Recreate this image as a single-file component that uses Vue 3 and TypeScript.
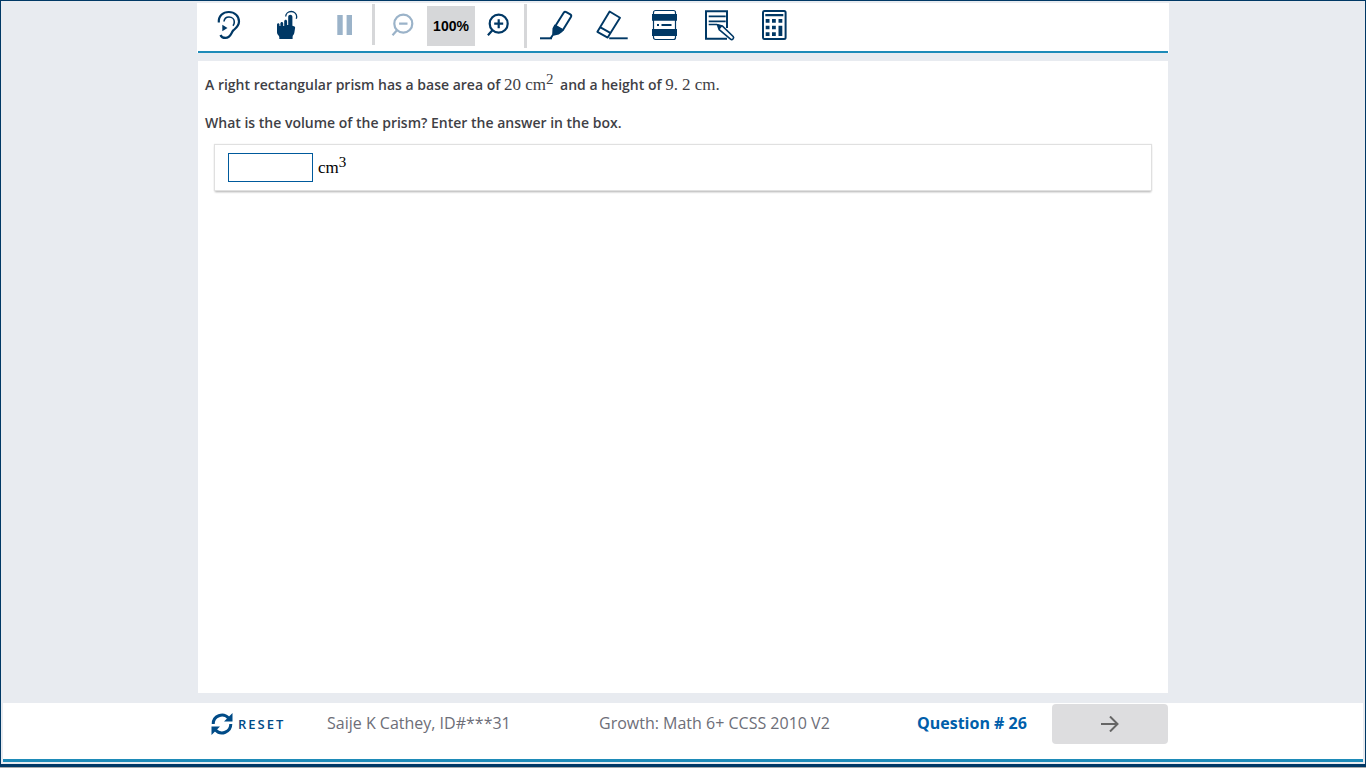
<script setup lang="ts">
import { ref } from 'vue'

const answer = ref('')
const zoom = ref(100)
const questionNumber = 26

function changeZoom(step: number) {
  zoom.value = Math.min(200, Math.max(100, zoom.value + step))
}
</script>

<template>
  <div class="frame">
    <header class="toolbar">
      <div class="group">
        <button class="tool" type="button" aria-label="Read aloud">
          <svg viewBox="0 0 40 40" fill="none" stroke="currentColor">
            <path d="M11.8 16.5C11.3 10 16 6 21.8 6c6 0 10.2 4.200 10.200 9.500 0 4.500-3 6.500-5.500 8.700C24 26.500 24 31.900 18.500 31.900c-2.700 0-4.300-1-5-2.900" stroke-width="2.200" />
            <path d="M17 15.500c.3-2.800 2.500-4.500 5-4.500 3.200 0 5.300 2.200 5.300 5 0 1.600-.4 2.700-1.300 3.800" stroke-width="1.600" />
            <path d="M15.300 18.700v6.600l5.200-3.300z" fill="currentColor" stroke="none" />
          </svg>
        </button>
        <button class="tool" type="button" aria-label="Pointer">
          <svg viewBox="0 0 40 40" fill="currentColor">
            <path d="M12 18.800c0-2 2.500-2 2.500 0V20h.9v-2.500c0-2.100 2.800-2.100 2.800 0V20h1v-4.500c0-2.200 2.900-2.200 2.900 0V19h1.100v-8.300c0-2.700 4.200-2.700 4.200 0v9l2.100.9c.5.300.7.700.6 1.400l-.8 5c-.4 1.800-1.700 2.200-1.700 4V33H14.300v-2c0-1.300-2.300-2.300-2.300-4.500z" />
            <path d="M20.700 10.500c.1-3 2.500-5 5.500-5 3.300 0 5.500 2.500 5.500 5.200 0 .7-.2 1.400-.5 2" fill="none" stroke="currentColor" stroke-width="1.300" />
          </svg>
        </button>
        <button class="tool muted" type="button" aria-label="Pause">
          <svg viewBox="0 0 40 40" fill="currentColor">
            <path d="M14.300 9h5.400v20h-5.400zM23.600 9H29v20h-5.400z" />
          </svg>
        </button>
      </div>
      <div class="group ruled zooming">
        <button class="tool muted" type="button" aria-label="Zoom out" @click="changeZoom(-25)">
          <svg viewBox="0 0 40 40" fill="none" stroke="currentColor" stroke-width="2.200">
            <circle cx="22.300" cy="17.700" r="9" />
            <path d="M16 24.300l-4.500 5M18.100 17.700h8.400" />
          </svg>
        </button>
        <output class="level">{{ zoom }}%</output>
        <button class="tool" type="button" aria-label="Zoom in" @click="changeZoom(25)">
          <svg viewBox="0 0 40 40" fill="none" stroke="currentColor" stroke-width="2.200">
            <circle cx="19.700" cy="17.700" r="9" />
            <path d="M13.400 24.300l-4.500 5M15.200 17.700h9M19.700 13.200v9" />
          </svg>
        </button>
      </div>
      <div class="group ruled marking">
        <button class="tool" type="button" aria-label="Highlighter">
          <svg viewBox="0 0 40 40" fill="none" stroke="currentColor">
            <path d="M5 32.300h12" stroke-width="2" />
            <path d="M20.500 19.800l8.200-13.100q1-1.500 2.600-.6l4 2.300q1.500 1 .6 2.600l-8 13z" stroke-width="2" stroke-linejoin="round" />
            <path d="M19.500 18.500l9 5.300-.9 1.900-3.800 2.800-5.400 1.200-1.600 2.800-2-.7 2.400-3.600.3-5.900z" fill="currentColor" stroke="none" />
          </svg>
        </button>
        <button class="tool" type="button" aria-label="Eraser">
          <svg viewBox="0 0 40 40" fill="none" stroke="currentColor" stroke-width="1.900" stroke-linejoin="round">
            <path d="M18.600 5.500l10.400 6.300-12.300 19.800-10.300-5.800zM9.500 21.300l10.200 5.800" />
            <path d="M18.200 32.300h18.500" />
          </svg>
        </button>
        <button class="tool" type="button" aria-label="Line reader">
          <svg viewBox="0 0 40 40">
            <rect x="6.500" y="4.500" width="22" height="29" rx="2" fill="none" stroke="currentColor" stroke-width="1.200" />
            <path d="M5 8h25v6.700H5zM5 23h25v7H5zM10 18h2v2h-2zM14.500 18h10v2h-10z" fill="currentColor" />
          </svg>
        </button>
        <button class="tool" type="button" aria-label="Notepad">
          <svg viewBox="0 0 40 40" fill="none" stroke="currentColor" stroke-width="2">
            <path d="M24 22V5.300H3v27.400h21" />
            <path d="M5.700 10.300h17M5.700 15.300h17M5.700 18.500h8.500" stroke-width="1.700" />
            <path d="M14.500 18.700l1.700 5 11.300 9.500q1.300 1 2.500-.2t.2-2.500l-10.700-10.400z" fill="#fff" stroke-width="1.600" stroke-linejoin="round" />
            <path d="M14 18l5.500 2-3.200 3.700z" fill="currentColor" stroke="none" />
          </svg>
        </button>
        <button class="tool" type="button" aria-label="Calculator">
          <svg viewBox="0 0 40 40" fill="currentColor">
            <rect x="4" y="5" width="22.600" height="28" rx="1.500" fill="none" stroke="currentColor" stroke-width="2" />
            <path d="M6.300 8h18v2.200h-18zM6.700 13h3.800v3.700H6.700zM13 13h3.800v3.700H13zM19.500 13h3.800v3.700h-3.800zM6.700 19.700h3.800v3.600H6.700zM13 19.700h3.800v3.600H13zM6.700 26.300h3.800V30H6.700zM13 26.300h3.800V30H13zM19.500 19.700h3.800V30h-3.800z" />
          </svg>
        </button>
      </div>
    </header>

    <main class="sheet">
      <p>
        A right rectangular prism has a base area of
        <span class="math spaced">20 cm<sup>2</sup></span> and a height of
        <span class="math">9.<span class="digit">2 cm.</span></span>
      </p>
      <p>What is the volume of the prism? Enter the answer in the box.</p>
      <div class="response">
        <input id="answer" v-model="answer" type="text" autocomplete="off" />
        <label class="math unit" for="answer">cm<sup>3</sup></label>
      </div>
    </main>

    <footer class="bar">
      <div class="status">
        <button class="reset" type="button">
          <svg viewBox="0 0 22 22" fill="none" stroke="currentColor" stroke-width="3">
            <path d="M2.200 11A8.800 8.800 0 0 1 17.500 5M19.800 11A8.800 8.800 0 0 1 4.500 17" />
            <path d="M21.500 0v8.500H13zM.5 22v-8.500H9z" fill="currentColor" stroke="none" />
          </svg>
          RESET
        </button>
        <span class="info">Saije K Cathey, ID#***31</span>
        <span class="info">Growth: Math 6+ CCSS 2010 V2</span>
        <strong class="info">Question # {{ questionNumber }}</strong>
        <button class="next" type="button" aria-label="Next question">
          <svg viewBox="0 0 18 16" fill="none" stroke="currentColor" stroke-width="2">
            <path d="M0 8h16.500M9 .5L16.500 8 9 15.500" />
          </svg>
        </button>
      </div>
    </footer>
  </div>
</template>

<style>
body {
  margin: 0;
  background: #a9abad;
}
</style>

<style scoped>
.frame {
  box-sizing: border-box;
  min-height: calc(100vh - 1px);
  display: flex;
  flex-direction: column;
  align-items: center;
  padding: 2px 2px 0;
  border: 1px solid #003865;
  border-bottom-width: 3px;
  background: #e8ebf0;
  font-family: "Open Sans", "Noto Sans", sans-serif;
}

button {
  display: flex;
  align-items: center;
  justify-content: center;
  padding: 0;
  border: 0;
  background: none;
  color: #003865;
  font-family: inherit;
  cursor: pointer;
}

.toolbar {
  box-sizing: border-box;
  width: 100%;
  max-width: 972px;
  min-height: 50px;
  display: flex;
  align-items: flex-start;
  padding: 0 1px;
  background: linear-gradient(#1e8bb8, #1e8bb8) 1px 100% / calc(100% - 2px) 2px no-repeat, #fff;
}

.group {
  display: flex;
  padding-top: 3px;
}

.tool {
  width: 58px;
  height: 40px;
}

.tool svg {
  width: 40px;
  height: 40px;
}

.muted {
  color: #9bb3c9;
}

.ruled {
  position: relative;
  padding-left: 3px;
}

.ruled::before {
  content: "";
  position: absolute;
  top: 1px;
  left: 0;
  width: 3px;
  height: 41px;
  background: #d6d7d9;
}

.zooming {
  padding-right: 1px;
}

.zooming .tool {
  width: 52px;
}

.zooming .tool:last-child {
  width: 48px;
}

.marking::before {
  height: 44px;
}

.marking .tool {
  width: 56px;
}

.level {
  width: 48px;
  background: #d6d7d9;
  color: #000;
  font: bold 14px/40px "Liberation Sans", sans-serif;
  text-align: center;
}

.sheet {
  box-sizing: border-box;
  width: 100%;
  max-width: 970px;
  flex: 1;
  margin: 8px 0 10px;
  padding: 12px 7px;
  background: #fff;
  color: #3f3f46;
  font-size: 14px;
  font-weight: 600;
}

.sheet p {
  margin: 0 0 14px;
  line-height: 24px;
}

.math {
  font-family: "Liberation Serif", serif;
  font-size: 17px;
  font-weight: 400;
}

.math sup {
  position: relative;
  top: -6px;
  font-size: 15px;
  line-height: 0;
  vertical-align: baseline;
}

.spaced {
  margin-right: 3px;
}

.digit {
  margin-left: 4px;
}

.response {
  display: flex;
  align-items: center;
  gap: 5px;
  margin: -4px 10px 0;
  padding: 8px 13px;
  background: #fff;
  box-shadow: 0 0 1px 1px #e0e0e0, 0 2px 2px #aaa;
}

.response input {
  box-sizing: border-box;
  width: 85px;
  height: 29px;
  padding: 0 6px;
  border: 1px solid #005a9c;
  border-radius: 0;
  background: #fff;
  font-size: 14px;
}

.unit {
  color: #000;
}

.bar {
  width: 100%;
  min-height: 56px;
  display: flex;
  justify-content: center;
  align-items: flex-start;
  margin-bottom: 2px;
  border-bottom: 3px solid #1e8bb8;
  background: #fff;
}

.status {
  width: 100%;
  max-width: 970px;
  display: grid;
  grid-template-columns: 129px 272px 1fr 135px 116px;
  align-items: center;
  padding-top: 1px;
  color: #6d6e78;
  font-size: 16px;
}

.info {
  padding-bottom: 2px;
}

strong.info {
  color: #005eaa;
}

.reset {
  justify-content: flex-start;
  gap: 5px;
  padding-left: 13px;
  color: #004b87;
  font-size: 13px;
  font-weight: 600;
  letter-spacing: 2px;
}

.reset svg {
  width: 22px;
  height: 22px;
}

.next {
  height: 40px;
  border-radius: 4px;
  background: #dddddf;
  color: #666;
}

.next svg {
  width: 18px;
  height: 16px;
}
</style>
